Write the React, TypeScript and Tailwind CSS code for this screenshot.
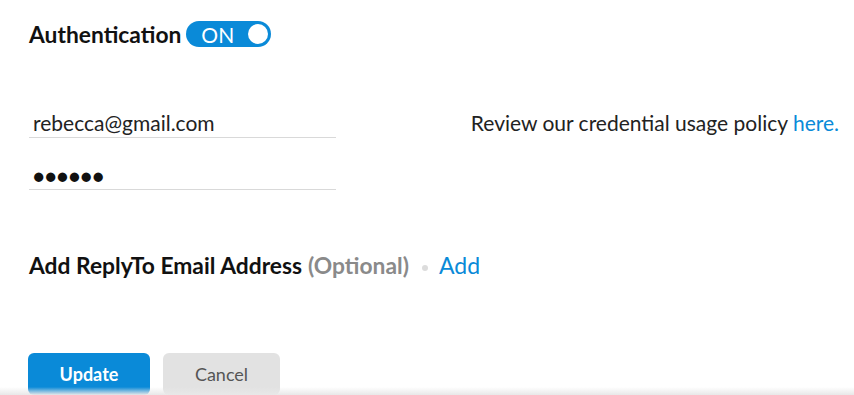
export default function App() {
  return (
    <div className="relative h-[395px] w-[854px] overflow-hidden bg-white font-['Lato','Liberation_Sans',sans-serif] text-[#111]">
      {/* Header */}
      <div className="flex items-center gap-[5px] pl-[29px] pt-[20px]">
        <span className="text-[22.8px] font-bold leading-[28px] text-[#111]">Authentication</span>
        <button className="flex h-[26px] w-[85px] items-center justify-between rounded-full bg-[#0a8ad8] pl-[15px] pr-[3px]">
          <span className="text-[21px] leading-none text-white">ON</span>
          <span className="h-[20px] w-[20px] rounded-full bg-white"></span>
        </button>
      </div>

      {/* Credentials */}
      <div className="mt-[62px] flex items-start justify-between pl-[29px] pr-[15px]">
        <div className="flex w-[307px] flex-col gap-[25px]">
          <div className="border-b border-[#d9d9d9] pb-[1px] pl-[4px] text-[21px] leading-[26px] text-[#222]">
            rebecca@gmail.com
          </div>
          <div className="border-b border-[#d9d9d9] pl-[4px] text-[19px] leading-[26px] tracking-[0.5px] text-[#111]">
            ●●●●●●
          </div>
        </div>
        <p className="text-[21px] leading-[26px] text-[#222]">
          Review our credential usage policy <a className="text-[#0a8ad8]">here.</a>
        </p>
      </div>

      {/* Reply-to */}
      <div className="mt-[61px] flex items-center pl-[29px]">
        <span className="text-[22.8px] font-bold leading-[28px] text-[#111]">Add ReplyTo Email Address</span>
        <span className="ml-[6px] text-[22.8px] font-bold leading-[28px] text-[#8a8a8a]">(Optional)</span>
        <span className="ml-[13px] mt-[6px] h-[6px] w-[6px] rounded-full bg-[#dcdcdc]"></span>
        <a className="ml-[11px] text-[23px] leading-[28px] text-[#0a8ad8]">Add</a>
      </div>

      {/* Actions */}
      <div className="mt-[74px] flex gap-[13px] pl-[28px]">
        <button className="h-[42px] w-[122px] rounded-[6px] bg-[#0a8ad8] text-[18px] font-bold text-white">Update</button>
        <button className="h-[42px] w-[117px] rounded-[6px] bg-[#e2e2e2] text-[18px] text-[#555]">Cancel</button>
      </div>

      <div className="pointer-events-none absolute bottom-0 left-0 right-0 h-[8px] bg-gradient-to-b from-transparent to-[#e8e8e8]"></div>
    </div>
  );
}
